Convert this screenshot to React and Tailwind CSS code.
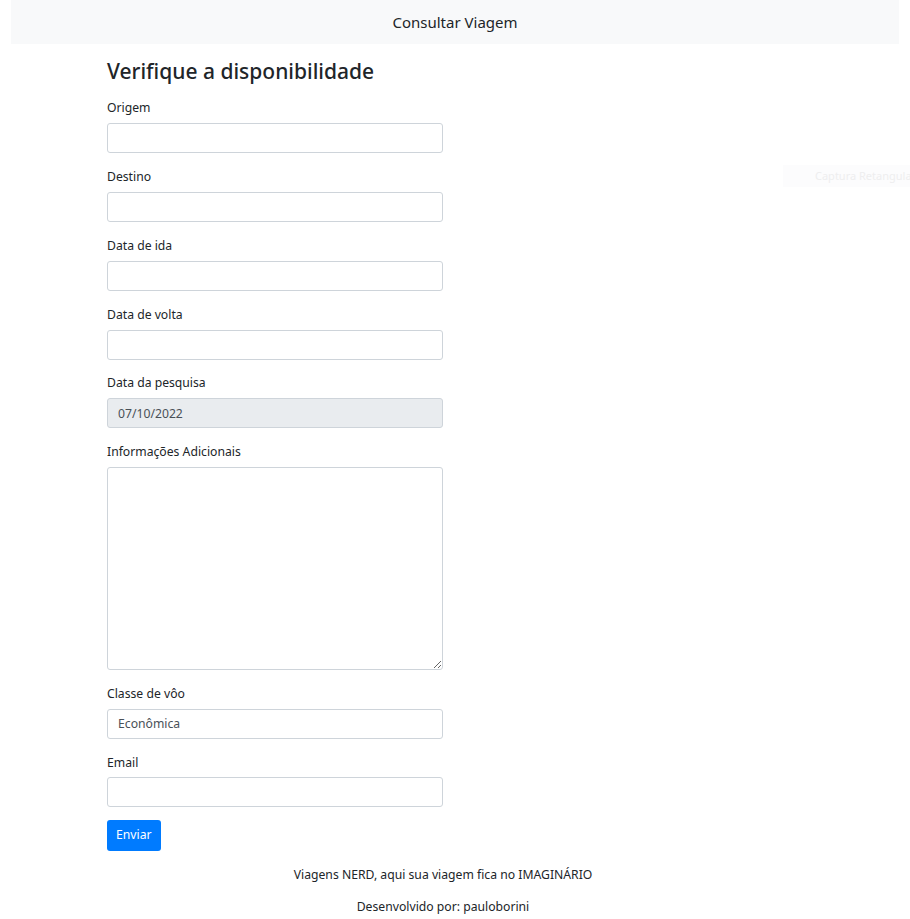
export default function App() {
  const fields = [
    { label: "Origem", mb: "mb-[14px]" },
    { label: "Destino", mb: "mb-[14px]" },
    { label: "Data de ida", mb: "mb-[14px]" },
    { label: "Data de volta", mb: "mb-[13px]" },
  ]

  return (
    <div className="relative min-h-screen overflow-hidden bg-white text-[#212529]" style={{ fontFamily: '"Noto Sans", "Open Sans", sans-serif' }}>
      {/* Navbar */}
      <div className="px-[11px]">
        <nav className="flex h-[44px] items-center justify-center bg-[#f8f9fa]">
          <span className="text-[15px] leading-none">Consultar Viagem</span>
        </nav>
      </div>

      {/* Form */}
      <div className="ml-[107px] w-[672px]">
        <h3 className="mt-[14px] mb-[14px] text-[21px] font-medium leading-[26px]">Verifique a disponibilidade</h3>

        <form className="w-[336px]" onSubmit={(e) => e.preventDefault()}>
          {fields.map((f) => (
            <div key={f.label} className={f.mb}>
              <label className="mb-[6px] block text-[12.2px] leading-[19px]">{f.label}</label>
              <input type="text" className="block h-[30px] w-full rounded-[3px] border border-[#ced4da] bg-white px-[10px] text-[12.2px] outline-none" />
            </div>
          ))}

          <div className="mb-[14px]">
            <label className="mb-[6px] block text-[12.2px] leading-[19px]">Data da pesquisa</label>
            <input
              type="text"
              disabled
              defaultValue="07/10/2022"
              className="block h-[30px] w-full rounded-[3px] border border-[#ced4da] bg-[#e9ecef] px-[10px] text-[12.2px] text-[#495057] outline-none"
            />
          </div>

          <div className="mb-[14px]">
            <label className="mb-[6px] block text-[12.2px] leading-[19px]">Informações Adicionais</label>
            <textarea className="block h-[203px] w-full rounded-[3px] border border-[#ced4da] bg-white px-[10px] text-[12.2px] outline-none" />
          </div>

          <div className="mb-[14px]">
            <label className="mb-[6px] block text-[12.2px] leading-[19px]">Classe de vôo</label>
            <div className="flex h-[30px] w-full items-center rounded-[3px] border border-[#ced4da] bg-white px-[10px] text-[12.2px] text-[#495057]">
              Econômica
            </div>
          </div>

          <div className="mb-[13px]">
            <label className="mb-[5px] block text-[12.2px] leading-[19px]">Email</label>
            <input type="email" className="block h-[30px] w-full rounded-[3px] border border-[#ced4da] bg-white px-[10px] text-[12.2px] outline-none" />
          </div>

          <button type="submit" className="h-[31px] rounded-[3px] bg-[#007bff] px-[9px] text-[12.2px] text-white">
            Enviar
          </button>
        </form>

        {/* Footer */}
        <footer className="mt-[14px] text-center text-[12.2px] leading-[19px]">
          <p className="mb-[13px]">Viagens NERD, aqui sua viagem fica no IMAGINÁRIO</p>
          <p>Desenvolvido por: pauloborini</p>
        </footer>
      </div>

      {/* faint screen-capture overlay, cut by the window edge as in the capture */}
      <div className="absolute top-[165px] left-[783px] flex h-[22px] w-[127px] items-center overflow-hidden bg-[#fcfcfd] pl-[32px] text-[11px] whitespace-nowrap text-[#eeeeef]">
        Captura Retangular
      </div>
    </div>
  )
}
